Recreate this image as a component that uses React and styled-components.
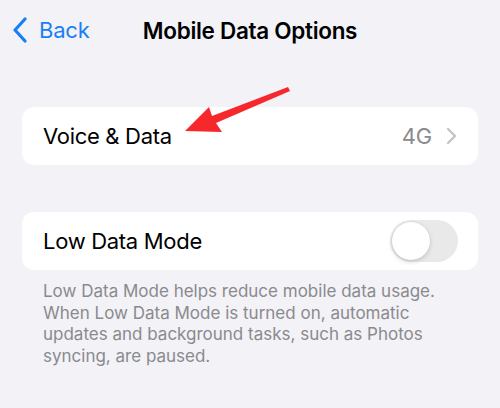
import React from "react";
import styled, { createGlobalStyle } from "styled-components";

const Global = createGlobalStyle`
  html, body { margin: 0; padding: 0; background: #f2f2f7; }
  body { font-family: Inter, "Noto Sans", sans-serif; -webkit-font-smoothing: antialiased; }
`;

const Page = styled.div`
  position: relative;
  width: 500px;
  height: 408px;
  background: #f2f2f7;
  overflow: hidden;
`;

const NavBar = styled.div`
  position: relative;
  height: 62px;
  display: flex;
  align-items: center;
  justify-content: center;
`;

const BackButton = styled.div`
  position: absolute;
  left: 12px;
  top: 17px;
  display: flex;
  align-items: center;
  gap: 11px;
  color: #1a7ff5;
  font-size: 22px;
  letter-spacing: -0.2px;
`;

const Title = styled.div`
  font-size: 22.5px;
  font-weight: 600;
  color: #000;
  letter-spacing: -0.3px;
  margin-top: -1px;
`;

const Content = styled.div`
  padding: 45px 22px 0;
  display: flex;
  flex-direction: column;
`;

const Card = styled.div`
  background: #fff;
  border-radius: 12px;
  height: 58px;
  display: flex;
  align-items: center;
  padding: 0 21px;
  margin-bottom: ${(p) => p.$mb || 0}px;
`;

const Label = styled.div`
  flex: 1;
  font-size: 22px;
  color: #000;
  letter-spacing: -0.3px;
`;

const Value = styled.div`
  font-size: 22px;
  color: #8a8a8e;
  letter-spacing: -0.2px;
  margin-right: 14px;
`;

const Toggle = styled.div`
  width: 68px;
  height: 42px;
  border-radius: 21px;
  background: #e9e9ea;
  position: relative;
  margin-right: -1px;
`;

const Knob = styled.div`
  position: absolute;
  left: 2px;
  top: 2px;
  width: 38px;
  height: 38px;
  border-radius: 50%;
  background: #fff;
  box-shadow: 0 2px 5px rgba(0, 0, 0, 0.15), 0 0 0 0.5px rgba(0, 0, 0, 0.06);
`;

const Footer = styled.div`
  padding: 11px 21px 0;
  font-size: 17px;
  line-height: 21.5px;
  color: #8a8a8e;
  letter-spacing: 0;
`;

const Arrow = styled.svg`
  position: absolute;
  left: 0;
  top: 0;
  pointer-events: none;
`;

export default function App() {
  return (
    <>
      <Global />
      <Page>
        <NavBar>
          <BackButton>
            <svg width="16" height="26" viewBox="0 0 16 26">
              <path d="M13 2 L3 13 L13 24" fill="none" stroke="#1a7ff5" strokeWidth="3.2" strokeLinecap="round" strokeLinejoin="round" />
            </svg>
            <span>Back</span>
          </BackButton>
          <Title>Mobile Data Options</Title>
        </NavBar>
        <Content>
          <Card $mb={47}>
            <Label>Voice &amp; Data</Label>
            <Value>4G</Value>
            <svg width="11" height="18" viewBox="0 0 11 18">
              <path d="M2 2 L9 9 L2 16" fill="none" stroke="#c4c4c7" strokeWidth="2.4" strokeLinecap="round" strokeLinejoin="round" />
            </svg>
          </Card>
          <Card>
            <Label>Low Data Mode</Label>
            <Toggle>
              <Knob />
            </Toggle>
          </Card>
          <Footer>
            Low Data Mode helps reduce mobile data usage. When Low Data Mode is turned on, automatic updates and background tasks, such as Photos syncing, are paused.
          </Footer>
        </Content>
        <Arrow width="500" height="408" viewBox="0 0 500 408">
          <polygon points="185,131 209,107 212,116 288,87 290,91 216,123 222,132" fill="#f7282c" />
        </Arrow>
      </Page>
    </>
  );
}
